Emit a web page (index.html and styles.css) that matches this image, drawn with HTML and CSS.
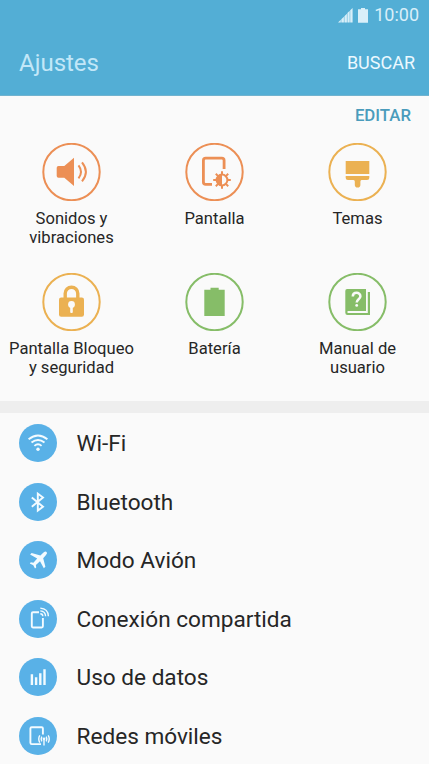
FILE: index.html
```html
<!DOCTYPE html>
<html lang="es">
<head>
<meta charset="utf-8">
<title>Ajustes</title>
<link rel="stylesheet" href="styles.css">
</head>
<body>
<header class="header">
  <div class="status">
    <svg class="signal" width="15" height="15" viewBox="0 0 15 15"><path d="M0 14.5L2.8 11.8V14.5ZM3.3 11.3L5.9 8.8V14.5H3.3ZM6.4 8.2L8.9 5.7V14.5H6.4ZM9.4 5.1L11.7 2.8V14.5H9.4ZM12.2 2.3L14.6 0V14.5H12.2Z"/></svg>
    <svg class="cell" width="10" height="15" viewBox="0 0 10 15"><path d="M3 0H7V1.2H10V14.8H0V1.2H3Z"/></svg>
    <span class="time">10:00</span>
  </div>
  <div class="bar">
    <h1 class="title">Ajustes</h1>
    <span class="search">BUSCAR</span>
  </div>
</header>
<main>
  <section class="quick">
    <div class="edit"><span>EDITAR</span></div>
    <div class="grid">
      <div class="tile orange">
        <svg width="59" height="58" viewBox="-0.5 0 59 58"><circle class="ring" cx="29" cy="29" r="28.2"/>
          <path class="fill" d="M16 23H21.8L31.5 14.7V43L21.8 34.7H16Q14.2 34.7 14.2 33V24.7Q14.2 23 16 23Z"/>
          <path class="line" d="M36 22.3Q41 28.8 36 35.3M39.5 19.3Q47.3 28.8 39.5 38.3"/></svg>
        <span>Sonidos y<br>vibraciones</span>
      </div>
      <div class="tile orange">
        <svg width="59" height="58" viewBox="-0.5 0 59 58"><circle class="ring" cx="29" cy="29" r="28.2"/>
          <path class="thick" d="M38.6 26V17.5Q38.6 15.2 36.3 15.2H20.2Q17.9 15.2 17.9 17.5V39Q17.9 41.4 20.2 41.4H26.5"/>
          <circle class="line" cx="36.5" cy="37" r="5.4"/>
          <path class="fill" d="M36.5 31.5A5.5 5.5 0 0 0 36.5 42.5Z"/>
          <path class="line" d="M36.5 31.5V28.2M36.5 42.5V45.8M31 37H27.7M42 37H45.3M32.6 33.1L30.3 30.8M40.4 33.1L42.7 30.8M32.6 40.9L30.3 43.2M40.4 40.9L42.7 43.2"/></svg>
        <span>Pantalla</span>
      </div>
      <div class="tile amber">
        <svg width="59" height="58" viewBox="-0.5 0 59 58"><circle class="ring" cx="29" cy="29" r="28.2"/>
          <path class="fill" d="M17.2 18H40.8V31H17.2ZM17.2 33.1H40.8V35Q40.8 37 38.5 37H33Q31.9 37 31.9 38.5V41.7A2.8 2.8 0 0 1 26.3 41.7V38.5Q26.3 37 25 37H19.5Q17.2 37 17.2 35Z"/></svg>
        <span>Temas</span>
      </div>
      <div class="tile amber">
        <svg width="59" height="58" viewBox="-0.5 0 59 58"><circle class="ring" cx="29" cy="29" r="28.2"/>
          <path class="shackle" d="M22.7 25V20.5A6.3 6.3 0 0 1 35.3 20.5V25"/>
          <rect class="fill" x="16.5" y="24.4" width="25" height="19.3" rx="2.2"/>
          <circle class="hole" cx="29" cy="31.5" r="3.4"/><rect class="hole" x="27.7" y="32" width="2.6" height="8" rx="1"/></svg>
        <span>Pantalla Bloqueo<br>y seguridad</span>
      </div>
      <div class="tile green">
        <svg width="59" height="58" viewBox="-0.5 0 59 58"><circle class="ring" cx="29" cy="29" r="28.2"/>
          <path class="fill" d="M25 14.7H33.2V16.7H39.2V43H18.8V16.7H25Z"/></svg>
        <span>Batería</span>
      </div>
      <div class="tile green">
        <svg width="59" height="58" viewBox="-0.5 0 59 58"><circle class="ring" cx="29" cy="29" r="28.2"/>
          <path class="fill" d="M18.6 16H37.5V38H19.8Q18.8 38 18.8 39Q18.8 40 19.8 40H39.3V19H41.5V42H19Q16.8 42 16.8 39.8V18Q16.8 16 18.6 16Z"/>
          <path class="mark" d="M24.3 23.4C24.3 18.7 31.9 18.7 31.9 23.2C31.9 26.2 28.2 26.2 28.2 29.5"/><circle class="hole" cx="28.2" cy="32.4" r="1.4"/></svg>
        <span>Manual de<br>usuario</span>
      </div>
    </div>
  </section>
  <ul class="list">
    <li><svg width="38" height="38" viewBox="0 0 38 38"><circle class="disc" cx="19" cy="19" r="19"/>
      <path class="w" d="M9.6 15.3Q19 7.6 28.4 15.3M12.5 18.6Q19 13.2 25.5 18.6M15.4 21.9Q19 18.8 22.6 21.9"/><circle class="wf" cx="19" cy="25.2" r="1.7"/></svg><span>Wi-Fi</span></li>
    <li><svg width="38" height="38" viewBox="0 0 38 38"><circle class="disc" cx="19" cy="19" r="19"/>
      <path class="w" d="M12.8 14.5L24 23.8L18.8 27.6V10.6L24 14.5L12.8 23.8"/></svg><span>Bluetooth</span></li>
    <li><svg width="38" height="38" viewBox="0 0 38 38"><circle class="disc" cx="19" cy="19" r="19"/>
      <path class="wf" d="M27.6 11Q26.4 10 24.5 11.6L21.4 14.4L12.6 12L11.1 13.5L18.2 17.5L14.4 21.7L11.8 21.3L10.8 22.4L14.3 24.2L16 27.6L17.2 26.6L16.9 24L21 20.3L24.8 27.3L26.4 25.7L24.2 17.2L27 14.1Q28.8 12.2 27.6 11Z"/></svg><span>Modo Avión</span></li>
    <li><svg width="38" height="38" viewBox="0 0 38 38"><circle class="disc" cx="19" cy="19" r="19"/>
      <path class="w" d="M20 12.3H14Q12.8 12.3 12.8 13.5V26.3Q12.8 27.5 14 27.5H22.7Q23.9 27.5 23.9 26.3V18"/>
      <path class="thin" d="M21.3 13.7Q23.7 13.8 23.8 16.2M21.3 10.9Q26.4 11.2 26.6 16.2M21.3 8.1Q29.1 8.6 29.4 16.2"/></svg><span>Conexión compartida</span></li>
    <li><svg width="38" height="38" viewBox="0 0 38 38"><circle class="disc" cx="19" cy="19" r="19"/>
      <path class="wf" d="M11.7 16.3H14.1V27H11.7ZM15.9 19.2H18.3V27H15.9ZM20.1 15.2H22.5V27H20.1ZM24.3 11.2H26.7V27H24.3Z"/></svg><span>Uso de datos</span></li>
    <li><svg width="38" height="38" viewBox="0 0 38 38"><circle class="disc" cx="19" cy="19" r="19"/>
      <path class="w" d="M23.9 17.5V11.5Q23.9 10.2 22.6 10.2H12.7Q11.4 10.2 11.4 11.5V25.8Q11.4 27.1 12.7 27.1H22"/>
      <circle class="wf" cx="25" cy="21.8" r="1.4"/><path class="thin" d="M25 22V28.5M22.8 19.6Q21.5 22 22.8 24.3M27.2 19.6Q28.5 22 27.2 24.3M20.8 18.4Q18.7 22 20.8 25.6M29.2 18.4Q31.3 22 29.2 25.6"/></svg><span>Redes móviles</span></li>
  </ul>
</main>
</body>
</html>
```
FILE: styles.css
```css
* { box-sizing: border-box; }
body {
  margin: 0;
  height: 764px;
  overflow: hidden;
  background: #fafafa;
  color: #262626;
  font-family: Roboto, "Liberation Sans", sans-serif;
}
.header {
  height: 96px;
  background: #53aed5;
  border-bottom: 1px solid #71b3cf;
}
.status {
  display: flex;
  align-items: center;
  justify-content: flex-end;
  height: 30px;
  padding-right: 10px;
  color: #d9eff9;
  fill: #d9eff9;
}
.signal { margin-right: 5px; }
.cell { margin-right: 6px; }
.time { font-size: 18px; line-height: 30px; }
.bar {
  display: flex;
  align-items: center;
  justify-content: space-between;
  height: 66px;
  padding: 0 14px 0 19px;
}
.title { margin: 0; font-size: 24px; font-weight: 400; color: #c2e7f8; }
.search { padding-bottom: 2px; font-size: 18px; color: #ecf9ff; }
.quick {
  height: 317px;
  border-bottom: 12px solid #eeeeee;
}
.edit {
  height: 47px;
  padding: 8px 18px 0 0;
  text-align: right;
  font-size: 16.8px;
  line-height: 22px;
  font-weight: 500;
  color: #4a9cbc;
}
.grid {
  display: grid;
  grid-template-columns: repeat(3, 143px);
  grid-auto-rows: 130px;
}
.tile {
  display: flex;
  flex-direction: column;
  align-items: center;
  gap: 8px;
  font-size: 16.6px;
  line-height: 19px;
  text-align: center;
  white-space: nowrap;
}
.tile svg { flex: none; }
.orange { --c: #ec8f55; }
.amber { --c: #ebb152; }
.green { --c: #86bd68; }
.tile span { color: #262626; }
.ring { fill: none; stroke: var(--c); stroke-width: 2; }
.fill { fill: var(--c); }
.line { fill: none; stroke: var(--c); stroke-width: 2; }
.thick { fill: none; stroke: var(--c); stroke-width: 2.8; }
.shackle { fill: none; stroke: var(--c); stroke-width: 3.4; }
.hole { fill: #fafafa; }
.mark { fill: none; stroke: #fafafa; stroke-width: 2.5; }
.list { margin: 0; padding: 1px 0 0; list-style: none; }
.list li {
  display: flex;
  align-items: center;
  gap: 19.5px;
  height: 58.5px;
  padding-left: 19px;
  font-size: 22.6px;
}
.list span { padding-top: 1px; }
.disc { fill: #59b1e7; }
.w { fill: none; stroke: #f3fbff; stroke-width: 1.9; }
.wf { fill: #f3fbff; }
.thin { fill: none; stroke: #f3fbff; stroke-width: 1.4; }
```
